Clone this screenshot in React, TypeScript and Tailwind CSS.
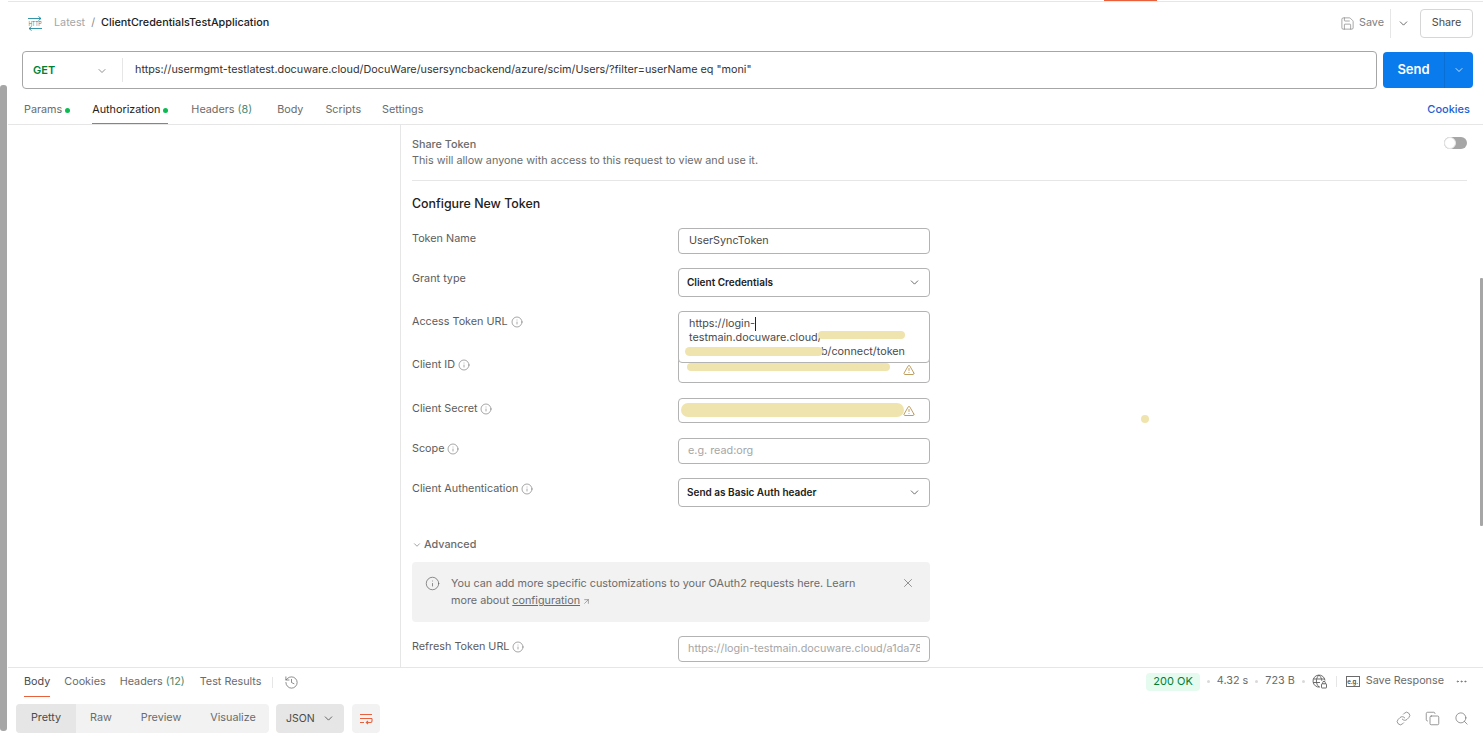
import React from "react";
import { ChevronDown, Save, History, Link, Copy, Search, X, Info, TriangleAlert, ArrowUpRight, Ellipsis } from "lucide-react";

const font = "font-['Inter','Liberation_Sans',sans-serif]";

function Dot() {
  return <span className="ml-[3px] inline-block h-[5px] w-[5px] rounded-full bg-[#0cbb52]" />;
}

function Tip() {
  return <Info className="ml-[3px] h-[12px] w-[12px] text-[#6b6b6b]" strokeWidth={1.2} />;
}

function Blob({ className }: { className: string }) {
  // scribbled-out secrets in the screenshot
  return <span className={`absolute rounded-full bg-[#f0e4ae] ${className}`} />;
}

function Row({ label, tip, children, className }: { label: string; tip?: boolean; children: React.ReactNode; className: string }) {
  return (
    <div className={`grid grid-cols-[266px_252px] ${className}`}>
      <div className="flex h-[22px] items-center text-[10.8px] text-[#5c5c5c]">
        {label}
        {tip && <Tip />}
      </div>
      {children}
    </div>
  );
}

function Field({ className, children }: { className: string; children?: React.ReactNode }) {
  return (
    <div className={`relative flex items-center rounded-[4px] border border-[#b3b3b3] bg-white text-[10.8px] ${className}`}>
      {children}
    </div>
  );
}

function Select({ value }: { value: string }) {
  return (
    <Field className="h-[29px] justify-between pl-[8px] pr-[8px] font-semibold text-[#212121]">
      <span className="text-[10px]">{value}</span>
      <ChevronDown className="h-[13px] w-[13px] text-[#4a4a4a]" strokeWidth={1.5} />
    </Field>
  );
}

function HttpIcon() {
  return (
    <svg width="16" height="16" viewBox="0 0 16 16" fill="none" stroke="#1d8a9e" strokeWidth="0.9">
      <path d="M1 3.5h13M11.5 1.5l2.5 2-2.5 2" />
      <path d="M15 13.5H2M4.5 11.5l-2.5 2 2.5 2" />
      <text x="1.5" y="10.6" fontSize="6.4" textLength="13" lengthAdjust="spacingAndGlyphs" fontFamily="Liberation Sans" fill="#1d8a9e" stroke="none">HTTP</text>
    </svg>
  );
}

function WrapIcon() {
  return (
    <svg width="14" height="14" viewBox="0 0 14 14" fill="none" stroke="#e8603c" strokeWidth="1.1">
      <path d="M1 2.5h12M1 6.5h12M1 10.5h4" />
      <path d="M13 6.5v2.5a1.5 1.5 0 0 1-1.5 1.5H7.5M9 9l-1.7 1.5L9 12" />
    </svg>
  );
}

function GlobeLock() {
  return (
    <svg width="15" height="15" viewBox="0 0 15 15" fill="none" stroke="#5c5c5c" strokeWidth="0.9">
      <path d="M8 13A6 6 0 1 1 13 6.5" />
      <path d="M1.2 5h11.5M1.2 8.5H8M7 1c-3.5 3.5-3.5 8.5 0 12M7 1c1.8 1.8 2.7 3.8 2.8 5.8" />
      <rect x="9.5" y="9.8" width="5" height="4.2" rx="0.5" />
      <path d="M10.7 9.8V8.6a1.3 1.3 0 0 1 2.6 0v1.2" />
    </svg>
  );
}

export default function App() {
  return (
    <div className={`relative flex h-[735px] w-full flex-col overflow-hidden bg-white pl-[8px] ${font}`}>
      {/* top strip left from the tab bar */}
      <div className="flex h-[2px] shrink-0 justify-end border-b border-[#e6e6e6] pr-[326px]">
        <div className="h-[1px] w-[53px] bg-[#e8603c]" />
      </div>

      {/* breadcrumb row */}
      <div className="flex h-[42px] shrink-0 items-center justify-between pl-[19px] pr-[10px]">
        <div className="flex items-center text-[10.8px]">
          <HttpIcon />
          <span className="ml-[11px] text-[#a6a6a6]">Latest</span>
          <span className="mx-[6px] text-[#8a8a8a]">/</span>
          <span className="font-medium text-[#212121]">ClientCredentialsTestApplication</span>
        </div>
        <div className="flex items-center">
          <Save className="h-[15px] w-[15px] text-[#808080]" strokeWidth={1.1} />
          <span className="ml-[4px] w-[31px] text-[10.8px] text-[#808080]">Save</span>
          <div className="flex h-[29px] items-center border-l border-[#e6e6e6] pl-[6px]">
            <ChevronDown className="h-[13px] w-[13px] text-[#4a4a4a]" strokeWidth={1.5} />
          </div>
          <div className="ml-[10px] flex h-[29px] w-[53px] items-center justify-center rounded-[4px] border border-[#d6d6d6] text-[10.8px] text-[#4a4a4a]">
            Share
          </div>
        </div>
      </div>

      {/* url bar */}
      <div className="mt-[7px] flex h-[38px] shrink-0 gap-[6px] pl-[14px] pr-[10px]">
        <div className="flex h-[38px] flex-1 items-center rounded-[4px] border border-[#a6a6a6]">
          <div className="flex h-[24px] w-[100px] items-center justify-between border-r border-[#e6e6e6] pl-[10px] pr-[14px] pt-[1px]">
            <span className="text-[11px] font-semibold text-[#007f31]">GET</span>
            <ChevronDown className="h-[12px] w-[12px] text-[#6b6b6b]" strokeWidth={1.5} />
          </div>
          <span className="pl-[12px] pt-[1px] text-[10.8px] text-[#333333]">
            https://usermgmt-testlatest.docuware.cloud/DocuWare/usersyncbackend/azure/scim/Users/?filter=userName eq "moni"
          </span>
        </div>
        <div className="mt-[1px] flex h-[36px] w-[90px] rounded-[4px] bg-[#097bed] text-white">
          <div className="flex w-[62px] items-center justify-center border-r border-[#0a6fd4] text-[13px] font-semibold">Send</div>
          <div className="flex flex-1 items-center justify-center">
            <ChevronDown className="h-[12px] w-[12px]" strokeWidth={1.5} />
          </div>
        </div>
      </div>

      {/* request tabs */}
      <div className="flex h-[36px] shrink-0 items-start justify-between border-b border-[#e6e6e6] pl-[16px] pr-[13px] text-[10.8px] text-[#6b6b6b]">
        <div className="flex">
          <div className="flex h-[35px] items-center pt-[7px]">Params<Dot /></div>
          <div className="ml-[22px] flex h-[35px] items-center border-b border-[#e8603c] pt-[8px] text-[#212121]">Authorization<Dot /></div>
          <div className="ml-[23px] flex h-[35px] items-center pt-[7px]">Headers&nbsp;<span className="text-[#4d8a72]">(8)</span></div>
          <div className="ml-[25px] flex h-[35px] items-center pt-[7px]">Body</div>
          <div className="ml-[22px] flex h-[35px] items-center pt-[7px]">Scripts</div>
          <div className="ml-[21px] flex h-[35px] items-center pt-[7px]">Settings</div>
        </div>
        <div className="flex h-[35px] items-center pt-[6px] text-[11px] font-medium text-[#1d5fd1]">Cookies</div>
      </div>

      {/* auth pane */}
      <div className="flex min-h-0 flex-1">
        <div className="w-[393px] shrink-0 border-r border-[#e6e6e6]" />
        <div className="min-w-0 flex-1 overflow-hidden pl-[11px] pr-[16px] pt-[12px]">
          <div className="flex items-start justify-between border-b border-[#e6e6e6] pb-[11px]">
            <div className="text-[10.8px] leading-[16px] text-[#6b6b6b]">
              <div className="font-medium">Share Token</div>
              <div>This will allow anyone with access to this request to view and use it.</div>
            </div>
            <div className="flex h-[12px] w-[23px] items-center rounded-full bg-[#a6a6a6]">
              <span className="h-[12px] w-[12px] rounded-full border border-[#e6e6e6] bg-white" />
            </div>
          </div>
          <h2 className="mt-[15px] text-[12.4px] font-medium leading-[16px] text-[#212121]">Configure New Token</h2>

          <div className="mt-[16px]">
            <Row label="Token Name" className="h-[40px]">
              <Field className="h-[26px] pl-[10px] text-[#4a4a4a]">UserSyncToken</Field>
            </Row>
            <Row label="Grant type" className="h-[43px]">
              <Select value="Client Credentials" />
            </Row>
            <Row label="Access Token URL" tip className="h-[43px]">
              <div className="relative">
                <div className="absolute left-0 top-0 z-10 h-[52px] w-[252px] rounded-[4px] border border-[#b3b3b3] bg-white pl-[10px] pr-[4px] pt-[5px] text-[10.8px] leading-[13.5px] text-[#4a4a4a]">
                  <div className="flex items-center">https://login-<span className="h-[14px] w-[1px] bg-[#212121]" /></div>
                  <div>testmain.docuware.cloud/</div>
                  <div className="pr-[20px] text-right">b/connect/token</div>
                  <Blob className="left-[139px] top-[19px] h-[8px] w-[87px]" />
                  <Blob className="left-[6px] top-[35px] h-[9px] w-[138px]" />
                </div>
              </div>
            </Row>
            <Row label="Client ID" tip className="h-[44px]">
              <Field className="h-[29px]">
                <Blob className="left-[8px] top-[8px] h-[8px] w-[203px]" />
                <TriangleAlert className="absolute right-[14px] top-[9px] h-[12px] w-[12px] text-[#a3741c]" strokeWidth={1.4} />
              </Field>
            </Row>
            <Row label="Client Secret" tip className="h-[40px]">
              <Field className="h-[25px]">
                <Blob className="left-[2px] top-[4px] h-[14px] w-[223px]" />
                <TriangleAlert className="absolute right-[14px] top-[6px] h-[12px] w-[12px] text-[#a3741c]" strokeWidth={1.4} />
              </Field>
            </Row>
            <Row label="Scope" tip className="h-[40px]">
              <Field className="h-[26px] pl-[9px] text-[#a6a6a6]">e.g. read:org</Field>
            </Row>
            <Row label="Client Authentication" tip className="h-[57px]">
              <Select value="Send as Basic Auth header" />
            </Row>
          </div>

          <div className="flex h-[20px] items-center text-[10.8px] font-medium text-[#6b6b6b]">
            <ChevronDown className="mr-[2px] h-[10px] w-[10px]" strokeWidth={1.5} />
            Advanced
          </div>
          <div className="mt-[7px] flex h-[60px] w-[518px] items-start rounded-[4px] bg-[#f2f2f2] pl-[13px] pr-[15px] pt-[13px] text-[10.8px] leading-[17px] text-[#6b6b6b]">
            <Info className="mt-[1px] h-[15px] w-[15px] shrink-0 text-[#5c5c5c]" strokeWidth={1.1} />
            <div className="ml-[11px] w-[420px]">
              You can add more specific customizations to your OAuth2 requests here. Learn more about{" "}
              <span className="underline">configuration</span>
              <ArrowUpRight className="ml-[2px] inline h-[9px] w-[9px]" strokeWidth={1.5} />
            </div>
            <X className="ml-auto mt-[1px] h-[14px] w-[14px] text-[#5c5c5c]" strokeWidth={1.1} />
          </div>
          <Row label="Refresh Token URL" tip className="mt-[14px] h-[26px]">
            <Field className="h-[26px] overflow-hidden whitespace-nowrap pl-[9px] pr-[9px] text-[#a6a6a6]">
              <span className="overflow-hidden">https://login-testmain.docuware.cloud/a1da78</span>
            </Field>
          </Row>
        </div>
      </div>

      {/* response pane */}
      <div className="h-[68px] shrink-0 border-t border-[#e6e6e6] pl-[8px] pr-[10px]">
        <div className="flex h-[29px] items-start justify-between pl-[8px] pr-[5px] text-[10.8px] text-[#6b6b6b]">
          <div className="flex items-center">
            <div className="flex h-[29px] items-center border-b border-[#e8603c] pt-[1px] text-[#4a4a4a]">Body</div>
            <span className="ml-[14px]">Cookies</span>
            <span className="ml-[14px]">Headers <span className="text-[#4d8a72]">(12)</span></span>
            <span className="ml-[15px]">Test Results</span>
            <span className="ml-[11px] h-[11px] border-l border-[#e6e6e6]" />
            <History className="ml-[11px] h-[15px] w-[15px] text-[#5c5c5c]" strokeWidth={1.1} />
          </div>
          <div className="flex h-[27px] items-center">
            <span className="flex h-[18px] items-center rounded-[4px] bg-[#e5fbef] px-[7px] text-[11px] text-[#007f31]">200 OK</span>
            <span className="mx-[7px] h-[3px] w-[3px] rounded-full bg-[#d9d9d9]" />
            <span>4.32 s</span>
            <span className="mx-[7px] h-[3px] w-[3px] rounded-full bg-[#d9d9d9]" />
            <span>723 B</span>
            <span className="mx-[7px] h-[3px] w-[3px] rounded-full bg-[#d9d9d9]" />
            <GlobeLock />
            <span className="mx-[9px] h-[11px] border-l border-[#e6e6e6]" />
            <span className="flex h-[11px] w-[14px] items-center justify-center border border-[#6b6b6b] text-[6px] font-semibold leading-none text-[#4a4a4a]">e.g.</span>
            <span className="ml-[6px]">Save Response</span>
            <Ellipsis className="ml-[11px] h-[13px] w-[13px] text-[#6b6b6b]" strokeWidth={1.5} />
          </div>
        </div>
        <div className="mt-[7px] flex items-center justify-between">
          <div className="flex items-center text-[10.8px] text-[#6b6b6b]">
            <div className="flex h-[29px] w-[253px] items-center overflow-hidden rounded-[4px] bg-[#f2f2f2]">
              <span className="flex h-[29px] w-[60px] items-center justify-center bg-[#e6e6e6] text-[#4a4a4a]">Pretty</span>
              <span className="ml-[14px]">Raw</span>
              <span className="ml-[29px]">Preview</span>
              <span className="ml-[29px]">Visualize</span>
            </div>
            <div className="ml-[7px] flex h-[29px] w-[68px] items-center justify-between rounded-[4px] bg-[#e6e6e6] pl-[10px] pr-[9px] text-[10.5px] text-[#4a4a4a]">
              JSON
              <ChevronDown className="h-[13px] w-[13px]" strokeWidth={1.5} />
            </div>
            <div className="ml-[8px] flex h-[29px] w-[28px] items-center justify-center rounded-[4px] bg-[#f2f2f2]">
              <WrapIcon />
            </div>
          </div>
          <div className="flex items-center gap-[14px] pr-[4px] text-[#6b6b6b]">
            <Link className="h-[15px] w-[15px]" strokeWidth={1.1} />
            <Copy className="h-[15px] w-[15px]" strokeWidth={1.1} />
            <Search className="h-[15px] w-[15px]" strokeWidth={1.1} />
          </div>
        </div>
      </div>

      {/* scrollbars and the stray redaction dot, on top of everything */}
      <div className="absolute left-0 top-[85px] h-[646px] w-[7px] rounded-[3px] bg-[#a6a6a6]" />
      <div className="absolute right-0 top-[278px] h-[248px] w-[3px] rounded-[1px] bg-[#a6a6a6]" />
      <div className="absolute left-[1141px] top-[415px] h-[8px] w-[8px] rounded-full bg-[#f0e4ae]" />
    </div>
  );
}
